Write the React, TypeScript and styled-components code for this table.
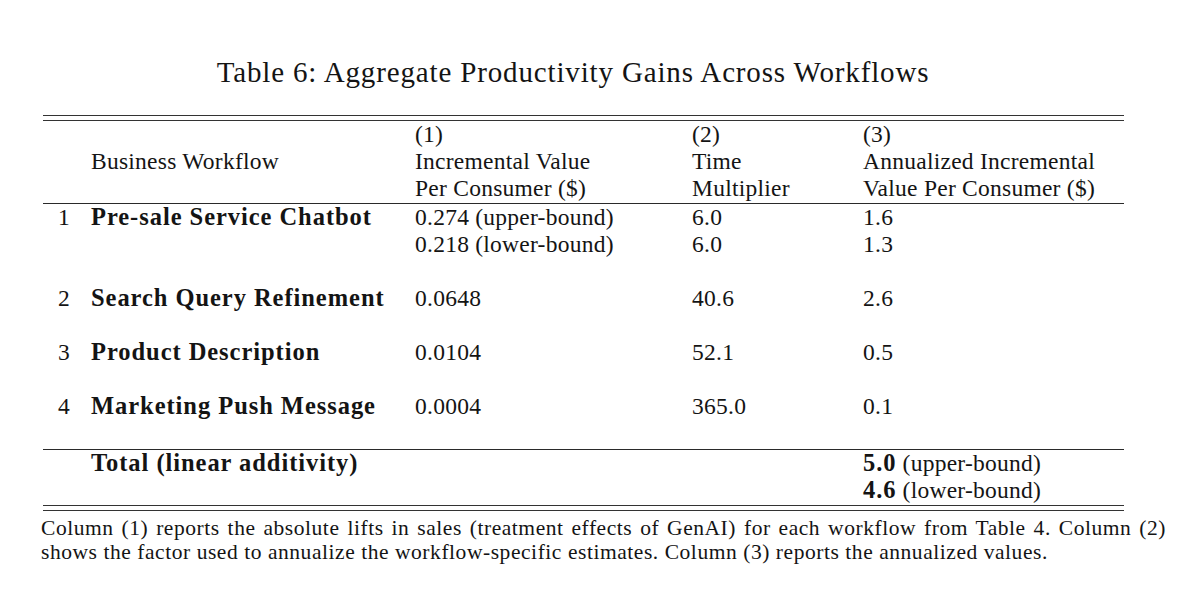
import React from "react";
import styled, { createGlobalStyle } from "styled-components";

const GlobalStyle = createGlobalStyle`
  html, body {
    margin: 0;
    padding: 0;
    background: #ffffff;
  }
  body {
    font-family: "Liberation Serif", "Times New Roman", serif;
    color: #141414;
  }
`;

const Page = styled.div`
  width: 1200px;
  height: 596px;
  padding-top: 55px;
  box-sizing: border-box;
  overflow: hidden;
`;

const Title = styled.h1`
  margin: 0 0 26px 0;
  font-size: 29px;
  line-height: 34px;
  font-weight: 400;
  letter-spacing: 0.85px;
  text-align: center;
  padding-right: 54px;
`;

const Table = styled.div`
  margin-left: 43px;
  width: 1081px;
  display: grid;
  grid-template-columns: 48px 324px 277px 171px 1fr;
  font-size: 23.5px;
  line-height: 27px;
  letter-spacing: 0.25px;
`;

const Rule = styled.div<{ $double?: boolean; $gap?: number }>`
  grid-column: 1 / -1;
  margin-top: ${(p) => p.$gap ?? 0}px;
  height: 1px;
  background: #2a2a2a;
  ${(p) =>
    p.$double &&
    `
    height: 6px;
    background: none;
    border-top: 1.5px solid #333;
    border-bottom: 1.5px solid #333;
    box-sizing: border-box;
  `}
`;

const Cell = styled.div<{ $pad?: boolean; $num?: boolean }>`
  height: ${(p) => (p.$pad ? "auto" : "auto")};
  padding-bottom: ${(p) => (p.$pad ? 27 : 0)}px;
  padding-left: ${(p) => (p.$num ? 15 : 0)}px;
  white-space: nowrap;
`;

const Head = styled(Cell)``;

const Label = styled.span`
  font-weight: 700;
  font-size: 24.5px;
  line-height: 18px;
  letter-spacing: 0.95px;
`;

const Line = styled.div`
  height: 27px;
`;

const Caption = styled.div`
  margin: 5px 0 0 41px;
  width: 1125px;
  font-size: 21.5px;
  line-height: 24px;
  letter-spacing: 0.55px;
`;

const CaptionLine = styled.div<{ $full?: boolean }>`
  text-align: ${(p) => (p.$full ? "justify" : "left")};
  text-align-last: ${(p) => (p.$full ? "justify" : "left")};
`;

type Row = {
  n: number;
  name: string;
  values: [string[], string[], string[]];
};

const rows: Row[] = [
  {
    n: 1,
    name: "Pre-sale Service Chatbot",
    values: [
      ["0.274 (upper-bound)", "0.218 (lower-bound)"],
      ["6.0", "6.0"],
      ["1.6", "1.3"],
    ],
  },
  {
    n: 2,
    name: "Search Query Refinement",
    values: [["0.0648"], ["40.6"], ["2.6"]],
  },
  {
    n: 3,
    name: "Product Description",
    values: [["0.0104"], ["52.1"], ["0.5"]],
  },
  {
    n: 4,
    name: "Marketing Push Message",
    values: [["0.0004"], ["365.0"], ["0.1"]],
  },
];

export default function App() {
  return (
    <Page>
      <GlobalStyle />
      <Title>Table 6: Aggregate Productivity Gains Across Workflows</Title>
      <Table>
        <Rule $double />
        <Head />
        <Head>
          <Line>&nbsp;</Line>
          <Line>Business Workflow</Line>
        </Head>
        <Head>
          <Line>(1)</Line>
          <Line>Incremental Value</Line>
          <Line>Per Consumer ($)</Line>
        </Head>
        <Head>
          <Line>(2)</Line>
          <Line>Time</Line>
          <Line>Multiplier</Line>
        </Head>
        <Head>
          <Line>(3)</Line>
          <Line>Annualized Incremental</Line>
          <Line>Value Per Consumer ($)</Line>
        </Head>
        <Rule $gap={1} />
        {rows.map((r) => (
          <React.Fragment key={r.n}>
            <Cell $pad $num>
              <Line>{r.n}</Line>
            </Cell>
            <Cell $pad>
              <Line>
                <Label>{r.name}</Label>
              </Line>
            </Cell>
            {r.values.map((col, i) => (
              <Cell $pad key={i}>
                {col.map((v, j) => (
                  <Line key={j}>{v}</Line>
                ))}
              </Cell>
            ))}
          </React.Fragment>
        ))}
        <Rule $gap={2} />
        <Cell />
        <Cell>
          <Line>
            <Label>Total (linear additivity)</Label>
          </Line>
        </Cell>
        <Cell />
        <Cell />
        <Cell>
          <Line>
            <Label>5.0</Label> (upper-bound)
          </Line>
          <Line>
            <Label>4.6</Label> (lower-bound)
          </Line>
        </Cell>
        <Rule $double $gap={1} />
      </Table>
      <Caption>
        <CaptionLine $full>
          Column (1) reports the absolute lifts in sales (treatment effects of
          GenAI) for each workflow from Table 4. Column (2)
        </CaptionLine>
        <CaptionLine>
          shows the factor used to annualize the workflow-specific estimates.
          Column (3) reports the annualized values.
        </CaptionLine>
      </Caption>
    </Page>
  );
}
